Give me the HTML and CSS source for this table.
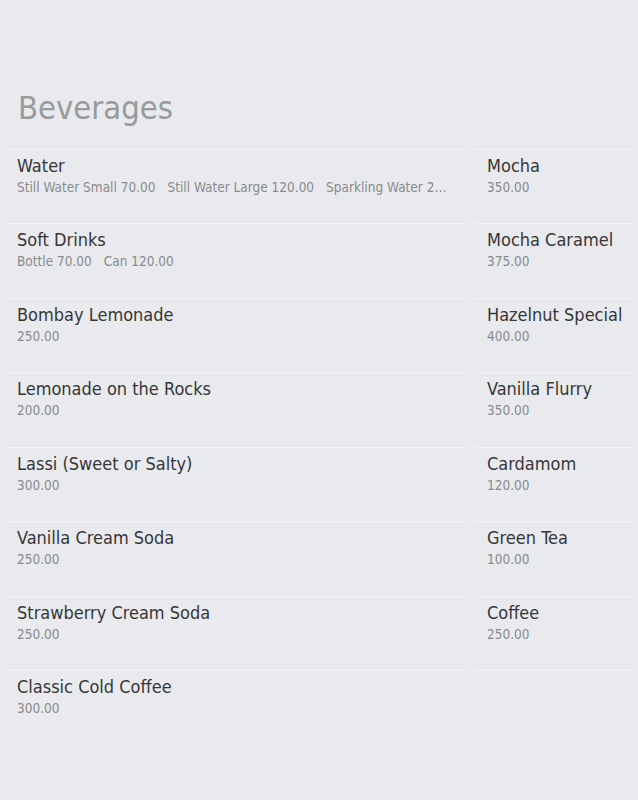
FILE: index.html
```html
<!DOCTYPE html>
<html>
<head>
<meta charset="utf-8">
<link rel="stylesheet" href="styles.css">
</head>
<body>
<div class="page">
  <h1 class="title">Beverages</h1>
  <div class="columns">
    <div class="col col-left">
      <div class="item">
        <div class="name">Water</div>
        <div class="prices"><span class="opt">Still Water Small 70.00</span><span class="opt">Still Water Large 120.00</span><span class="opt">Sparkling Water 220.00</span></div>
      </div>
      <div class="item">
        <div class="name">Soft Drinks</div>
        <div class="prices"><span class="opt">Bottle 70.00</span><span class="opt">Can 120.00</span></div>
      </div>
      <div class="item">
        <div class="name">Bombay Lemonade</div>
        <div class="prices">250.00</div>
      </div>
      <div class="item">
        <div class="name">Lemonade on the Rocks</div>
        <div class="prices">200.00</div>
      </div>
      <div class="item">
        <div class="name">Lassi (Sweet or Salty)</div>
        <div class="prices">300.00</div>
      </div>
      <div class="item">
        <div class="name">Vanilla Cream Soda</div>
        <div class="prices">250.00</div>
      </div>
      <div class="item">
        <div class="name">Strawberry Cream Soda</div>
        <div class="prices">250.00</div>
      </div>
      <div class="item">
        <div class="name">Classic Cold Coffee</div>
        <div class="prices">300.00</div>
      </div>
    </div>
    <div class="col col-right">
      <div class="item">
        <div class="name">Mocha</div>
        <div class="prices">350.00</div>
      </div>
      <div class="item">
        <div class="name">Mocha Caramel</div>
        <div class="prices">375.00</div>
      </div>
      <div class="item">
        <div class="name">Hazelnut Special</div>
        <div class="prices">400.00</div>
      </div>
      <div class="item">
        <div class="name">Vanilla Flurry</div>
        <div class="prices">350.00</div>
      </div>
      <div class="item">
        <div class="name">Cardamom</div>
        <div class="prices">120.00</div>
      </div>
      <div class="item">
        <div class="name">Green Tea</div>
        <div class="prices">100.00</div>
      </div>
      <div class="item">
        <div class="name">Coffee</div>
        <div class="prices">250.00</div>
      </div>
    </div>
  </div>
</div>
</body>
</html>
```
FILE: styles.css
```css
html, body {
  margin: 0;
  padding: 0;
  background: #e9eaee;
}
body {
  font-family: "DejaVu Sans Condensed", "DejaVu Sans", sans-serif;
  overflow: hidden;
}
.page {
  padding: 90px 0 0 5px;
  width: 638px;
  box-sizing: border-box;
}
.title {
  margin: 0 0 21px 13px;
  font-size: 32.5px;
  font-weight: normal;
  color: #999a9c;
  line-height: 37.8px;
}
.columns {
  display: flex;
  gap: 11px;
  align-items: flex-start;
}
.col-left {
  width: 459px;
}
.col-right {
  width: 161px;
  border-bottom: 1px solid #f3f4f6;
}
.item {
  height: 74.5px;
  box-sizing: border-box;
  border-top: 1px solid #f3f4f6;
  padding: 5px 12px 0 12px;
}
.name {
  font-size: 18px;
  line-height: 21px;
  color: #363636;
  white-space: nowrap;
}
.prices {
  margin-top: 3px;
  font-size: 13.5px;
  line-height: 16px;
  color: #888a8c;
  white-space: nowrap;
  overflow: hidden;
  text-overflow: ellipsis;
}
.opt {
  margin-right: 12px;
}
.opt:last-child {
  margin-right: 0;
}
```
